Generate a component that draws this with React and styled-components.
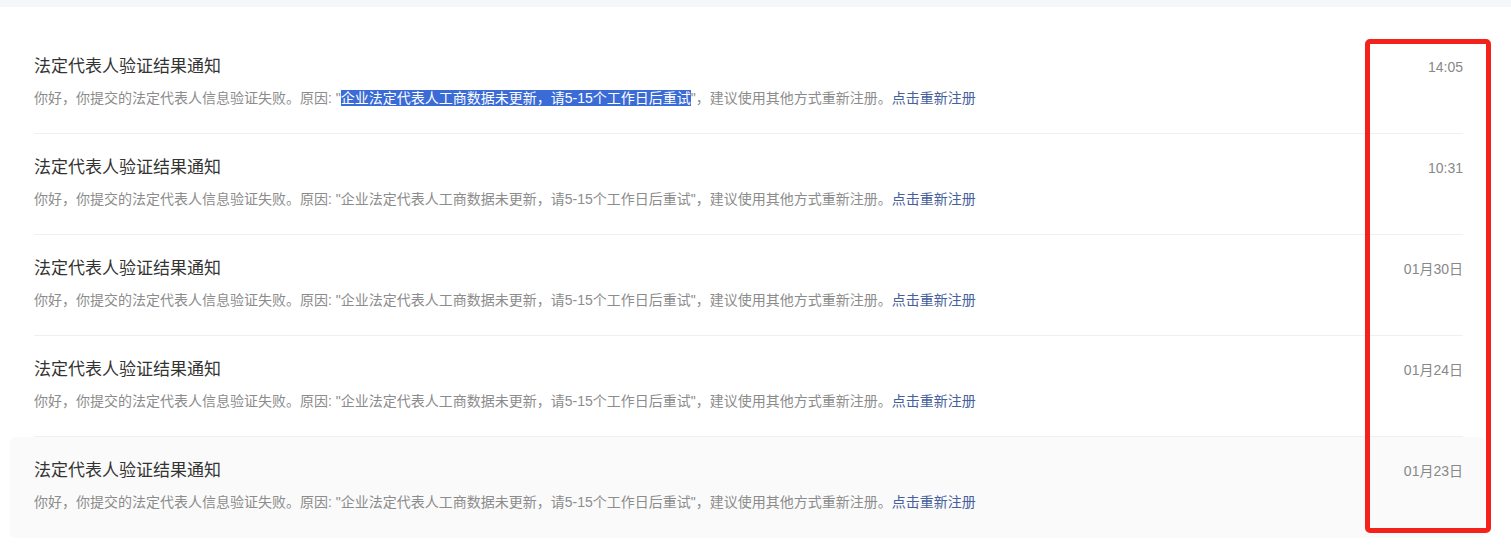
import React from "react";
import styled, { createGlobalStyle } from "styled-components";

const Global = createGlobalStyle`
  html, body { margin: 0; padding: 0; background: #ffffff; }
  body { font-family: "Liberation Sans", "Noto Sans CJK SC", sans-serif; }
  * { box-sizing: border-box; }
`;

const Page = styled.div`
  position: relative;
  width: 1511px;
  height: 559px;
  overflow: hidden;
  background: #fff;
`;

const TopBand = styled.div`
  height: 7px;
  background: #f5f6f8;
`;

const List = styled.ul`
  list-style: none;
  margin: 0;
  padding: 26px 26px 0 10px;
`;

const Item = styled.li`
  padding: 0 22px 0 24px;
  border-radius: 6px;
  background: ${(p) => (p.$active ? "#fafafa" : "transparent")};
`;

const Inner = styled.div`
  display: flex;
  justify-content: space-between;
  align-items: flex-start;
  padding: 23px 0 25px;
  border-bottom: 1px solid ${(p) => (p.$last ? "transparent" : "#f0f0f0")};
`;

const Body = styled.div`
  display: flex;
  flex-direction: column;
  gap: 10px;
`;

const Title = styled.div`
  font-size: 17px;
  line-height: 22px;
  color: #333;
`;

const Desc = styled.div`
  font-size: 14px;
  line-height: 20px;
  color: #8c8c8c;
  white-space: nowrap;
`;

const Selected = styled.span`
  background: #3a6bd6;
  color: #fff;
`;

const Link = styled.span`
  color: #45609a;
  cursor: pointer;
`;

const Time = styled.div`
  font-size: 14px;
  line-height: 22px;
  color: #888;
  white-space: nowrap;
`;

const Highlight = styled.div`
  position: absolute;
  left: 1365px;
  top: 39px;
  width: 126px;
  height: 494px;
  border: 5px solid #f5221b;
  border-radius: 5px;
  pointer-events: none;
`;

const items = [
  { time: "14:05", selected: true },
  { time: "10:31" },
  { time: "01月30日" },
  { time: "01月24日" },
  { time: "01月23日", active: true },
];

const quoted = "企业法定代表人工商数据未更新，请5-15个工作日后重试";

export default function App() {
  return (
    <Page>
      <Global />
      <TopBand />
      <List>
        {items.map((it, i) => (
          <Item key={i} $active={it.active}>
            <Inner $last={i === items.length - 1}>
              <Body>
                <Title>法定代表人验证结果通知</Title>
                <Desc>
                  你好，你提交的法定代表人信息验证失败。原因: "
                  {it.selected ? <Selected>{quoted}</Selected> : quoted}
                  "，建议使用其他方式重新注册。<Link>点击重新注册</Link>
                </Desc>
              </Body>
              <Time>{it.time}</Time>
            </Inner>
          </Item>
        ))}
      </List>
      <Highlight />
    </Page>
  );
}
